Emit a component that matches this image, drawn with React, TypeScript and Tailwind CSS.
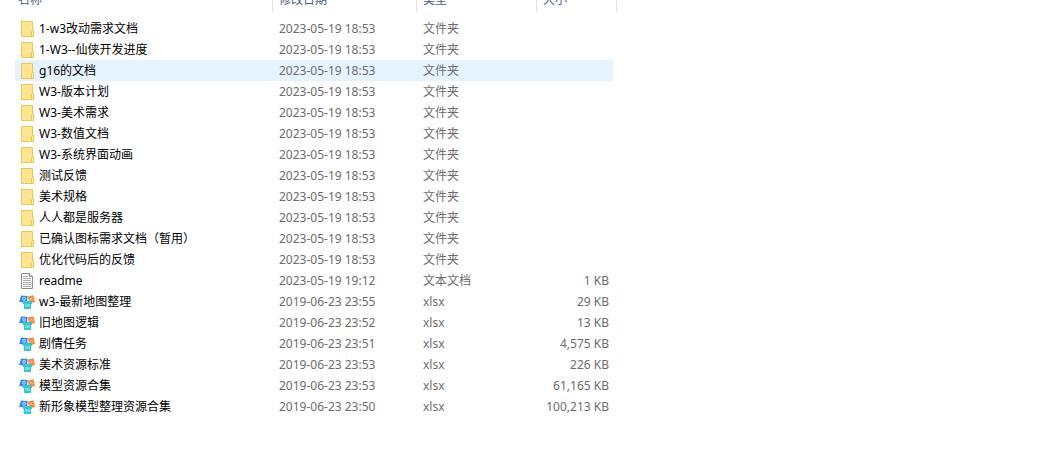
type FileKind = 'folder' | 'text' | 'sheet'

interface Entry {
  name: string
  modified: string
  kind: FileKind
  size?: string
}

const entries: Entry[] = [
  { name: '1-w3改动需求文档', modified: '2023-05-19 18:53', kind: 'folder' },
  { name: '1-W3--仙侠开发进度', modified: '2023-05-19 18:53', kind: 'folder' },
  { name: 'g16的文档', modified: '2023-05-19 18:53', kind: 'folder' },
  { name: 'W3-版本计划', modified: '2023-05-19 18:53', kind: 'folder' },
  { name: 'W3-美术需求', modified: '2023-05-19 18:53', kind: 'folder' },
  { name: 'W3-数值文档', modified: '2023-05-19 18:53', kind: 'folder' },
  { name: 'W3-系统界面动画', modified: '2023-05-19 18:53', kind: 'folder' },
  { name: '测试反馈', modified: '2023-05-19 18:53', kind: 'folder' },
  { name: '美术规格', modified: '2023-05-19 18:53', kind: 'folder' },
  { name: '人人都是服务器', modified: '2023-05-19 18:53', kind: 'folder' },
  { name: '已确认图标需求文档（暂用）', modified: '2023-05-19 18:53', kind: 'folder' },
  { name: '优化代码后的反馈', modified: '2023-05-19 18:53', kind: 'folder' },
  { name: 'readme', modified: '2023-05-19 19:12', kind: 'text', size: '1 KB' },
  { name: 'w3-最新地图整理', modified: '2019-06-23 23:55', kind: 'sheet', size: '29 KB' },
  { name: '旧地图逻辑', modified: '2019-06-23 23:52', kind: 'sheet', size: '13 KB' },
  { name: '剧情任务', modified: '2019-06-23 23:51', kind: 'sheet', size: '4,575 KB' },
  { name: '美术资源标准', modified: '2019-06-23 23:53', kind: 'sheet', size: '226 KB' },
  { name: '模型资源合集', modified: '2019-06-23 23:53', kind: 'sheet', size: '61,165 KB' },
  { name: '新形象模型整理资源合集', modified: '2019-06-23 23:50', kind: 'sheet', size: '100,213 KB' }
]

const kindLabels: Record<FileKind, string> = {
  folder: '文件夹',
  text: '文本文档',
  sheet: 'xlsx'
}

const FolderIcon = () => (
  <svg className="size-4 shrink-0" viewBox="0 0 16 16" aria-hidden="true">
    <path d="M2.5.5h11v9h1v6h-12z" fill="#ffe491" stroke="#ebc951" />
    <path d="M12.5 15.5v-5l1-1h1v6z" fill="#ffeaa5" stroke="#ebc951" />
  </svg>
)

const TextIcon = () => (
  <svg className="size-4 shrink-0" viewBox="0 0 16 16" aria-hidden="true">
    <path d="M2.5.5h8l3 3v12h-11z" fill="#fbfbfb" stroke="#8e8e8e" />
    <path d="M10.5.5v3h3" fill="#e4e4e4" stroke="#8e8e8e" />
    <path
      d="M4 3.5h5M4 5.5h8M4 7.5h8M4 9.5h8M4 11.5h8M4 13.5h8"
      stroke="#b0b0b0"
    />
  </svg>
)

const SheetIcon = () => (
  <svg className="size-4 shrink-0" viewBox="0 0 16 16" aria-hidden="true">
    <path d="M2 1.4 8.6 2 8 9 .2 8z" fill="#3389f2" />
    <path d="m8.8 2.6 5.6-1.4L16 8l-5.8 1.4z" fill="#f98a3c" />
    <circle cx="5" cy="4.8" r="1.4" fill="none" stroke="#c8e2ff" />
    <path d="m11 6.4.8-2.4 1.8 1.8" fill="none" stroke="#ffd0aa" />
    <path
      d="M4 7h9v3h-1v4.4a.6.6 0 0 1-.6.6H5.6a.6.6 0 0 1-.6-.6V10H4z"
      fill="#35c5d5"
    />
    <path d="M6 10h5v3H6z" fill="#6bdbe2" />
  </svg>
)

const icons = {
  folder: FolderIcon,
  text: TextIcon,
  sheet: SheetIcon
}

function HeaderCell({ label, span }: { label: string; span?: number }) {
  return (
    <th scope="col" colSpan={span} className="group p-0 pb-1.5 font-normal">
      <button className="flex h-3 w-full items-end border-r border-[#e2e2e2] pb-1.5 pl-1.5 leading-3 text-[#4c607a] group-first:pl-[3px]">
        {label}
      </button>
    </th>
  )
}

function FileRow({ entry, active }: { entry: Entry; active: boolean }) {
  const Icon = icons[entry.kind]

  return (
    <tr className={active ? 'h-[21px] bg-[#e5f3ff]' : 'h-[21px]'}>
      <td className="p-0 pl-1 text-black">
        <div className="flex items-center gap-1">
          <Icon />
          <span>{entry.name}</span>
        </div>
      </td>
      <td className="p-0 pl-1.5">{entry.modified}</td>
      <td className="p-0 pl-1.5">{kindLabels[entry.kind]}</td>
      <td className="p-0 pr-1 text-right">{entry.size}</td>
    </tr>
  )
}

export default function App() {
  return (
    <main className="min-h-screen overflow-x-auto bg-white pl-[15px] font-['Noto_Sans','Noto_Sans_CJK_SC',sans-serif] text-xs leading-5 text-[#6d6d6d]">
      <table className="w-[602px] table-fixed border-collapse whitespace-nowrap text-left">
        <colgroup>
          <col className="w-[258px]" />
          <col className="w-36" />
          <col className="w-30" />
          <col className="w-19" />
          <col className="w-1" />
        </colgroup>
        <thead>
          <tr>
            <HeaderCell label="名称" />
            <HeaderCell label="修改日期" />
            <HeaderCell label="类型" />
            <HeaderCell label="大小" span={2} />
          </tr>
        </thead>
        <tbody>
          {entries.map((entry) => (
            <FileRow
              key={entry.name}
              entry={entry}
              active={entry.name === 'g16的文档'}
            />
          ))}
        </tbody>
      </table>
    </main>
  )
}
